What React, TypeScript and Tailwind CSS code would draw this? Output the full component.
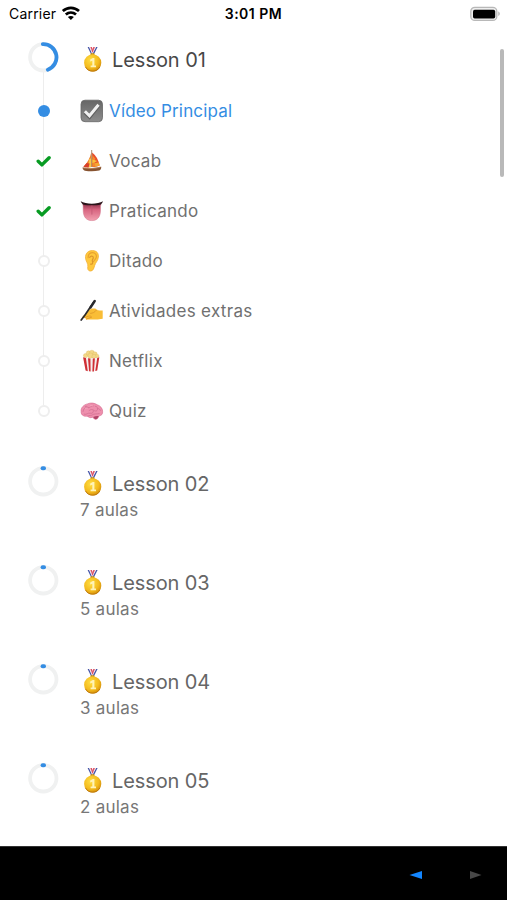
import type { ReactNode } from "react";

type StepStatus = "current" | "done" | "pending";

const Medal = () => (
    <svg viewBox="0 0 24 26" className="mb-0.5 h-[26px] w-6 shrink-0">
        <defs>
            <radialGradient id="medalGold" cx="40%" cy="35%" r="70%">
                <stop offset="0" stopColor="#ffdf45" />
                <stop offset="0.65" stopColor="#f3b91c" />
                <stop offset="1" stopColor="#cf8a0a" />
            </radialGradient>
        </defs>
        <path d="M7.6 1h1.6l3.3 7.3h-1.4z" fill="#4455a8" />
        <path d="M9.2 1h1.2l2.6 6-.6 1.3z" fill="#f1e4ec" />
        <path d="M10.4 1h1.5l1.4 4.4-.7 1.6z" fill="#dc5062" />
        <path d="M17.6 1H16l-3.7 7.3h1.6z" fill="#4455a8" />
        <path d="M16 1h-1.1l-3 6 .4 1.3z" fill="#f1e4ec" />
        <path d="M14.9 1h-1.6l-1.5 4 .7 1.8z" fill="#dc5062" />
        <rect x="10.4" y="7.3" width="4.2" height="2" rx=".8" fill="#c99417" />
        <circle cx="12.7" cy="16.8" r="8.6" fill="url(#medalGold)" />
        <path d="M5.4 20.8a8.2 8.2 0 0 0 14.4.2" fill="none" stroke="#bf790b" strokeWidth="1" />
        <path d="M10.2 13.6l2.6-1.7h1.6v7.7H16v1.6h-5.4v-1.6h1.7v-4.9l-2.1.9z" fill="#fff3b8" />
    </svg>
);

const CheckBox = () => (
    <svg viewBox="0 0 24 24" className="size-6 shrink-0">
        <defs>
            <linearGradient id="checkBox" x1="0" y1="0" x2="0" y2="1">
                <stop offset="0" stopColor="#666" />
                <stop offset="1" stopColor="#8d8d8d" />
            </linearGradient>
        </defs>
        <rect x="1" y="1.2" width="21.5" height="21.5" rx="4" fill="url(#checkBox)" stroke="#646464" strokeWidth=".8" />
        <path d="M5.1 13.2l4.5 4.4L18.4 6.4" fill="none" stroke="#606060" strokeWidth="4.2" />
        <path d="M4.9 12.3l4.6 4.5L18.5 5.8" fill="none" stroke="#f1f1f1" strokeWidth="3" />
    </svg>
);

const Sailboat = () => (
    <svg viewBox="0 0 24 24" className="size-6 shrink-0">
        <path d="M11.3 3.2C10 9 7.5 14 3.4 17.7c2.8.8 5.3.8 7.9.3z" fill="#ef7c2b" />
        <path d="M9.3 10l2-.8V18l-3.4.3z" fill="#fac846" />
        <path d="M3.4 17.7l3.2-3.6 3 .5-1 3.8c-1.8.1-3.5-.1-5.2-.7z" fill="#d8402a" />
        <path d="M12.1 3.4c4 2.9 6.4 7.5 7.6 13.2-2.5 1.3-4.9 1.6-7.6 1.2z" fill="#e94d2a" />
        <path d="M12.2 6l2.8 3.3.5 8.2c-1.1.3-2.2.4-3.3.2z" fill="#f58a2c" />
        <path d="M12.2 10.5l5.3 1.6-5.3 2.2z" fill="#fac13c" />
        <path d="M14.8 14.2l3.9-.9 1 3.3-4.5 1.1z" fill="#f6a530" />
        <path d="M11.7 1v17" stroke="#8b5a37" strokeWidth=".7" />
        <path d="M2.4 18.5c6.2 1.2 12.4 1 18.9-.7-.1 2.2-.8 3.3-2 3.8-4.9.8-9.8.8-14.4.1-1.4-.6-2.2-1.7-2.5-3.2z" fill="#875330" />
        <path d="M3.2 18.9c5.7 1 11.7.7 17.4-.8" fill="none" stroke="#bd895c" strokeWidth=".8" />
    </svg>
);

const Tongue = () => (
    <svg viewBox="0 0 24 24" className="size-6 shrink-0">
        <defs>
            <linearGradient id="tongue" x1="0" y1="0" x2="0" y2="1">
                <stop offset="0" stopColor="#8d2f48" />
                <stop offset=".35" stopColor="#d7647f" />
                <stop offset="1" stopColor="#f2a0b0" />
            </linearGradient>
        </defs>
        <path d="M2.8 4.6c5.5 1.4 12.7 1.4 18.2 0-.6 2-.5 3.8-.5 6.4 0 6.9-3 10.6-8.6 10.6S3.2 17.9 3.2 11c0-2.6 0-4.5-.4-6.4z" fill="url(#tongue)" stroke="#d07288" strokeWidth=".5" />
        <path d="M.7 2.3C3.3 4 7.5 4.7 11.8 4.7S20.4 4 23 2.3c-.5 1.4-1.2 2.3-2.1 3.1-5.3 1.2-12.7 1.2-18 0C2 4.6 1.2 3.7.7 2.3z" fill="#2b141a" />
        <path d="M11.9 7v8.2" stroke="#c05a75" strokeWidth=".8" strokeLinecap="round" />
    </svg>
);

const Ear = () => (
    <svg viewBox="0 0 24 24" className="size-6 shrink-0">
        <path d="M5.5 9.1C5.2 4.4 8 1.6 12.4 1.6c4.4 0 6.4 2.8 6 6.6-.3 3.5-2.7 5.1-3.7 8.2-.7 2.5-1.4 5.7-4.3 5.7-2.3 0-3.1-2.1-2.6-4.6.5-2.9-2-4.9-2.3-8.4z" fill="#ffc83d" stroke="#efaa30" strokeWidth=".7" />
        <path d="M8.1 8.7c.1-3.3 1.9-5 4.5-5 2.9 0 4.1 2.1 3.7 4.4-.4 2.1-2.1 3-2.8 4.4" fill="none" stroke="#e9a32f" strokeWidth="1.2" strokeLinecap="round" />
        <path d="M9.7 8.5c.8-2.2 3.7-1.7 3.6.1-.1 1.9-1.8 2.3-.8 4.1.7 1.4-.3 2.7-1.9 2.4" fill="none" stroke="#dd962b" strokeWidth="1.2" strokeLinecap="round" />
    </svg>
);

const WritingHand = () => (
    <svg viewBox="0 0 24 24" className="size-6 shrink-0">
        <path d="M2.6 17.5l5-5.3c1.6-1.6 3.2-2.3 5.1-2.6 2.2-.3 3.5.1 4.2 1.3 1.6.2 3.8.6 5.8.7v8.1c-2.5.4-4.2.9-6.7.9l-8.9-.1c-1.5 0-2-.8-1.3-1.8l-1.8.1c-1.4.1-2-.5-1.4-1.3z" fill="#f9bd36" />
        <path d="M4.4 18.6l4.2-1.4c1.3-.4 2-.2 2.7.5M6.5 20l5-1.8M10.5 14.4c2.4-.1 4.3-1.2 6-3.3" fill="none" stroke="#e09b2a" strokeWidth=".9" strokeLinecap="round" />
        <path d="M14.2 2.3L5.2 15.8l-4 5.3" fill="none" stroke="#29292d" strokeWidth="1.7" strokeLinecap="round" />
        <path d="M14.8 2l-4.3 6.5" stroke="#29292d" strokeWidth="2.3" strokeLinecap="round" />
    </svg>
);

const Popcorn = () => (
    <svg viewBox="0 0 24 24" className="size-6 shrink-0">
        <g fill="#f3d888" stroke="#d8b150" strokeWidth=".3">
            <circle cx="5.6" cy="6.6" r="2.2" />
            <circle cx="8.6" cy="4.2" r="2.4" />
            <circle cx="11.9" cy="3.6" r="2.4" />
            <circle cx="14.9" cy="5.1" r="2.3" />
            <circle cx="17" cy="7.2" r="2" />
            <circle cx="10.6" cy="6.7" r="2.7" />
            <circle cx="14" cy="7.4" r="2.1" />
        </g>
        <path d="M3.1 8.3c5.3 1.6 10.6 1.6 16.2 0l-2.1 13.3c-3.8 1.3-8 1.3-11.6 0z" fill="#f6eeee" />
        <path d="M3.1 8.3l2.8.7 1.9 13.3-2.2-.7zM8 9.3l2.4.2.2 13-1.5-.2zM12.8 9.5l2.1-.3-1 13.2-1.5.1zM17.2 8.9l2.1-.6-2.1 13.3-1.9.5z" fill="#cf2f35" />
    </svg>
);

const Brain = () => (
    <svg viewBox="0 0 24 24" className="size-6 shrink-0">
        <path d="M1.1 12.4C.6 8.8 3.8 5.7 7.4 4.9c3.2-1.5 7.3-1 9.7.8 3.1.8 5.4 3.6 5.5 6.4.3 3-.9 4.5-3.3 4.7-1.1 1.1-1.1 3.2-3.3 3.5-1.5.2-2.4-1.2-3.6-2-2.2 1.1-4.1-.4-4.7-1.1-3.4.3-6.7-.4-6.6-4.8z" fill="#ee8fad" stroke="#d3668b" strokeWidth=".6" />
        <path d="M3 12.5c.3-2.9 2.4-4.3 5-3.8 2.4.4 2.8-2.5 5.3-1.8M5.3 7.4c1.6-.6 2.5.3 2.7 1.3M4.1 15.2c2.8.9 3.4-1.6 6.1-1 2.6.5 3.3-.9 3.1-2.3M9.1 11.5c1.4-1.1 3.4-1.4 4.8-.2 2 1.7 4.2.1 3.6-1.6M15.3 7.3c1.5-.1 2.2.9 2.2 2.3 1.3-.3 2.5.7 2.9 1.9M7.7 17.2c2-1.4 3.5-.3 4.8-1.4 1.5-1.3 3.8-.5 6.7-1.2" fill="none" stroke="#cf6b8e" strokeWidth=".7" strokeLinecap="round" />
        <path d="M13.2 18c1.6-.9 3.6-1.2 5.6-1-.9 1.2-1.1 3-2.9 3.2-1.2.1-1.9-1.3-2.7-2.2z" fill="#b04468" />
        <path d="M5 10c1-1 2.2-1 3-.8M10 7c1-.6 2-.6 2.9-.2" fill="none" stroke="#f7adc2" strokeWidth=".8" />
    </svg>
);

const steps: { label: string; icon: ReactNode; status: StepStatus }[] = [
    { label: "Vídeo Principal", icon: <CheckBox />, status: "current" },
    { label: "Vocab", icon: <Sailboat />, status: "done" },
    { label: "Praticando", icon: <Tongue />, status: "done" },
    { label: "Ditado", icon: <Ear />, status: "pending" },
    { label: "Atividades extras", icon: <WritingHand />, status: "pending" },
    { label: "Netflix", icon: <Popcorn />, status: "pending" },
    { label: "Quiz", icon: <Brain />, status: "pending" },
];

const lessons = [
    { title: "Lesson 02", count: "7 aulas" },
    { title: "Lesson 03", count: "5 aulas" },
    { title: "Lesson 04", count: "3 aulas" },
    { title: "Lesson 05", count: "2 aulas" },
];

const ProgressRing = ({ started = false }: { started?: boolean }) => (
    <svg viewBox="0 0 32 32" className="size-8 shrink-0" fill="none">
        <circle cx="16.3" cy="16.3" r="13.2" stroke="#f0f1f1" strokeWidth="3.8" />
        {started ? (
            <path d="M15.8 3.1A13.2 13.2 0 0 1 20.8 28.7" stroke="#348de3" strokeWidth="3.8" strokeLinecap="round" />
        ) : (
            <path d="M15.6 3.2h1.4" stroke="#348de3" strokeWidth="4" strokeLinecap="round" />
        )}
    </svg>
);

const StepMarker = ({ status }: { status: StepStatus }) => {
    if (status === "current") return <span className="size-3 rounded-full bg-[#348de3]" />;
    if (status === "done") {
        return (
            <svg viewBox="0 0 16 12" className="h-3 w-4" fill="none">
                <path d="M2.2 6.3l3.7 3.6 7.2-7.2" stroke="#079b22" strokeWidth="3.4" strokeLinecap="round" strokeLinejoin="round" />
            </svg>
        );
    }
    return <span className="size-3 rounded-full border-2 border-[#eeeeee] bg-white" />;
};

const StatusBar = () => (
    <header className="grid h-7 grid-cols-3 items-center pb-px pl-[9px] pr-[7px] text-black">
        <div className="flex items-center gap-[5px]">
            <span className="text-[14px] tracking-[0.2px]">Carrier</span>
            <svg viewBox="0 0 20 15" className="h-[15px] w-5" fill="none" stroke="#000" strokeWidth="2.7">
                <path d="M1.8 5.1c4.7-4.3 11.5-4.3 16.2 0" />
                <path d="M4.8 8.6c3-2.7 7.2-2.7 10.2 0" />
                <path d="M6.9 11.1c1.8-1.5 4.2-1.5 6 0L9.9 14z" fill="#000" stroke="none" />
            </svg>
        </div>
        <span className="pr-0.5 text-center text-[14px] font-semibold tracking-[0.5px]">3:01 PM</span>
        <svg viewBox="0 0 32 16" className="h-4 w-8 justify-self-end">
            <rect x="2.8" y="1.4" width="26" height="13" rx="4" fill="#eee" stroke="#b8b8b8" strokeWidth="1.3" />
            <rect x="5" y="3.7" width="22.2" height="8.7" rx="1.7" fill="#000" />
            <path d="M30.4 5.6c1.7.7 1.7 3.7 0 4.4z" fill="#aaa" />
        </svg>
    </header>
);

export default function App() {
    return (
        <div className="relative flex h-[900px] w-full flex-col overflow-hidden bg-white font-['Inter',sans-serif]">
            <StatusBar />

            <main className="flex-1 overflow-hidden pl-[27px]">
                {/* Open lesson with its timeline */}
                <section className="relative">
                    <div className="absolute left-4 top-[44px] h-[333px] w-px bg-[#ededed]" />
                    <div className="relative flex h-[58px] items-center gap-[21px]">
                        <ProgressRing started />
                        <div className="flex items-center gap-2 pt-[5px] text-[20px] tracking-[-0.05px] text-[#484848]">
                            <Medal />
                            <h2>Lesson 01</h2>
                        </div>
                    </div>
                    <ul className="relative">
                        {steps.map((step) => (
                            <li key={step.label} className="flex h-[50px] items-center gap-5">
                                <span className="flex w-[33px] justify-center">
                                    <StepMarker status={step.status} />
                                </span>
                                <div className="flex items-center gap-[5px]">
                                    {step.icon}
                                    <span className={step.status === "current" ? "pt-0.5 text-[17px] tracking-[0.15px] text-[#348de3]" : "pt-0.5 text-[17px] tracking-[0.3px] text-[#707070]"}>
                                        {step.label}
                                    </span>
                                </div>
                            </li>
                        ))}
                    </ul>
                </section>

                {/* Collapsed lessons */}
                {lessons.map((lesson) => (
                    <section key={lesson.title} className="flex h-[99px] items-start gap-[21px] pt-[29px]">
                        <ProgressRing />
                        <div className="pt-1.5 text-[#666]">
                            <div className="flex h-[26px] items-center gap-2 text-[20px] tracking-[-0.1px]">
                                <Medal />
                                <h2>{lesson.title}</h2>
                            </div>
                            <p className="pt-px text-[17px] leading-6 tracking-[0.25px] text-[#777]">{lesson.count}</p>
                        </div>
                    </section>
                ))}
            </main>

            <div className="absolute right-[3px] top-[49px] h-32 w-1 rounded-full bg-[#b9b9b9]" />

            <footer className="flex h-[54px] items-center justify-end gap-[47px] border-t border-[#333] bg-black pr-[25px] pt-0.5">
                <svg viewBox="0 0 13 8" className="h-2 w-[13px]">
                    <path d="M0.5 4L13 0v8z" fill="#1386ff" />
                </svg>
                <svg viewBox="0 0 13 8" className="h-2 w-[13px]">
                    <path d="M12.5 4L1 0v8z" fill="#484848" />
                </svg>
            </footer>
        </div>
    );
}
